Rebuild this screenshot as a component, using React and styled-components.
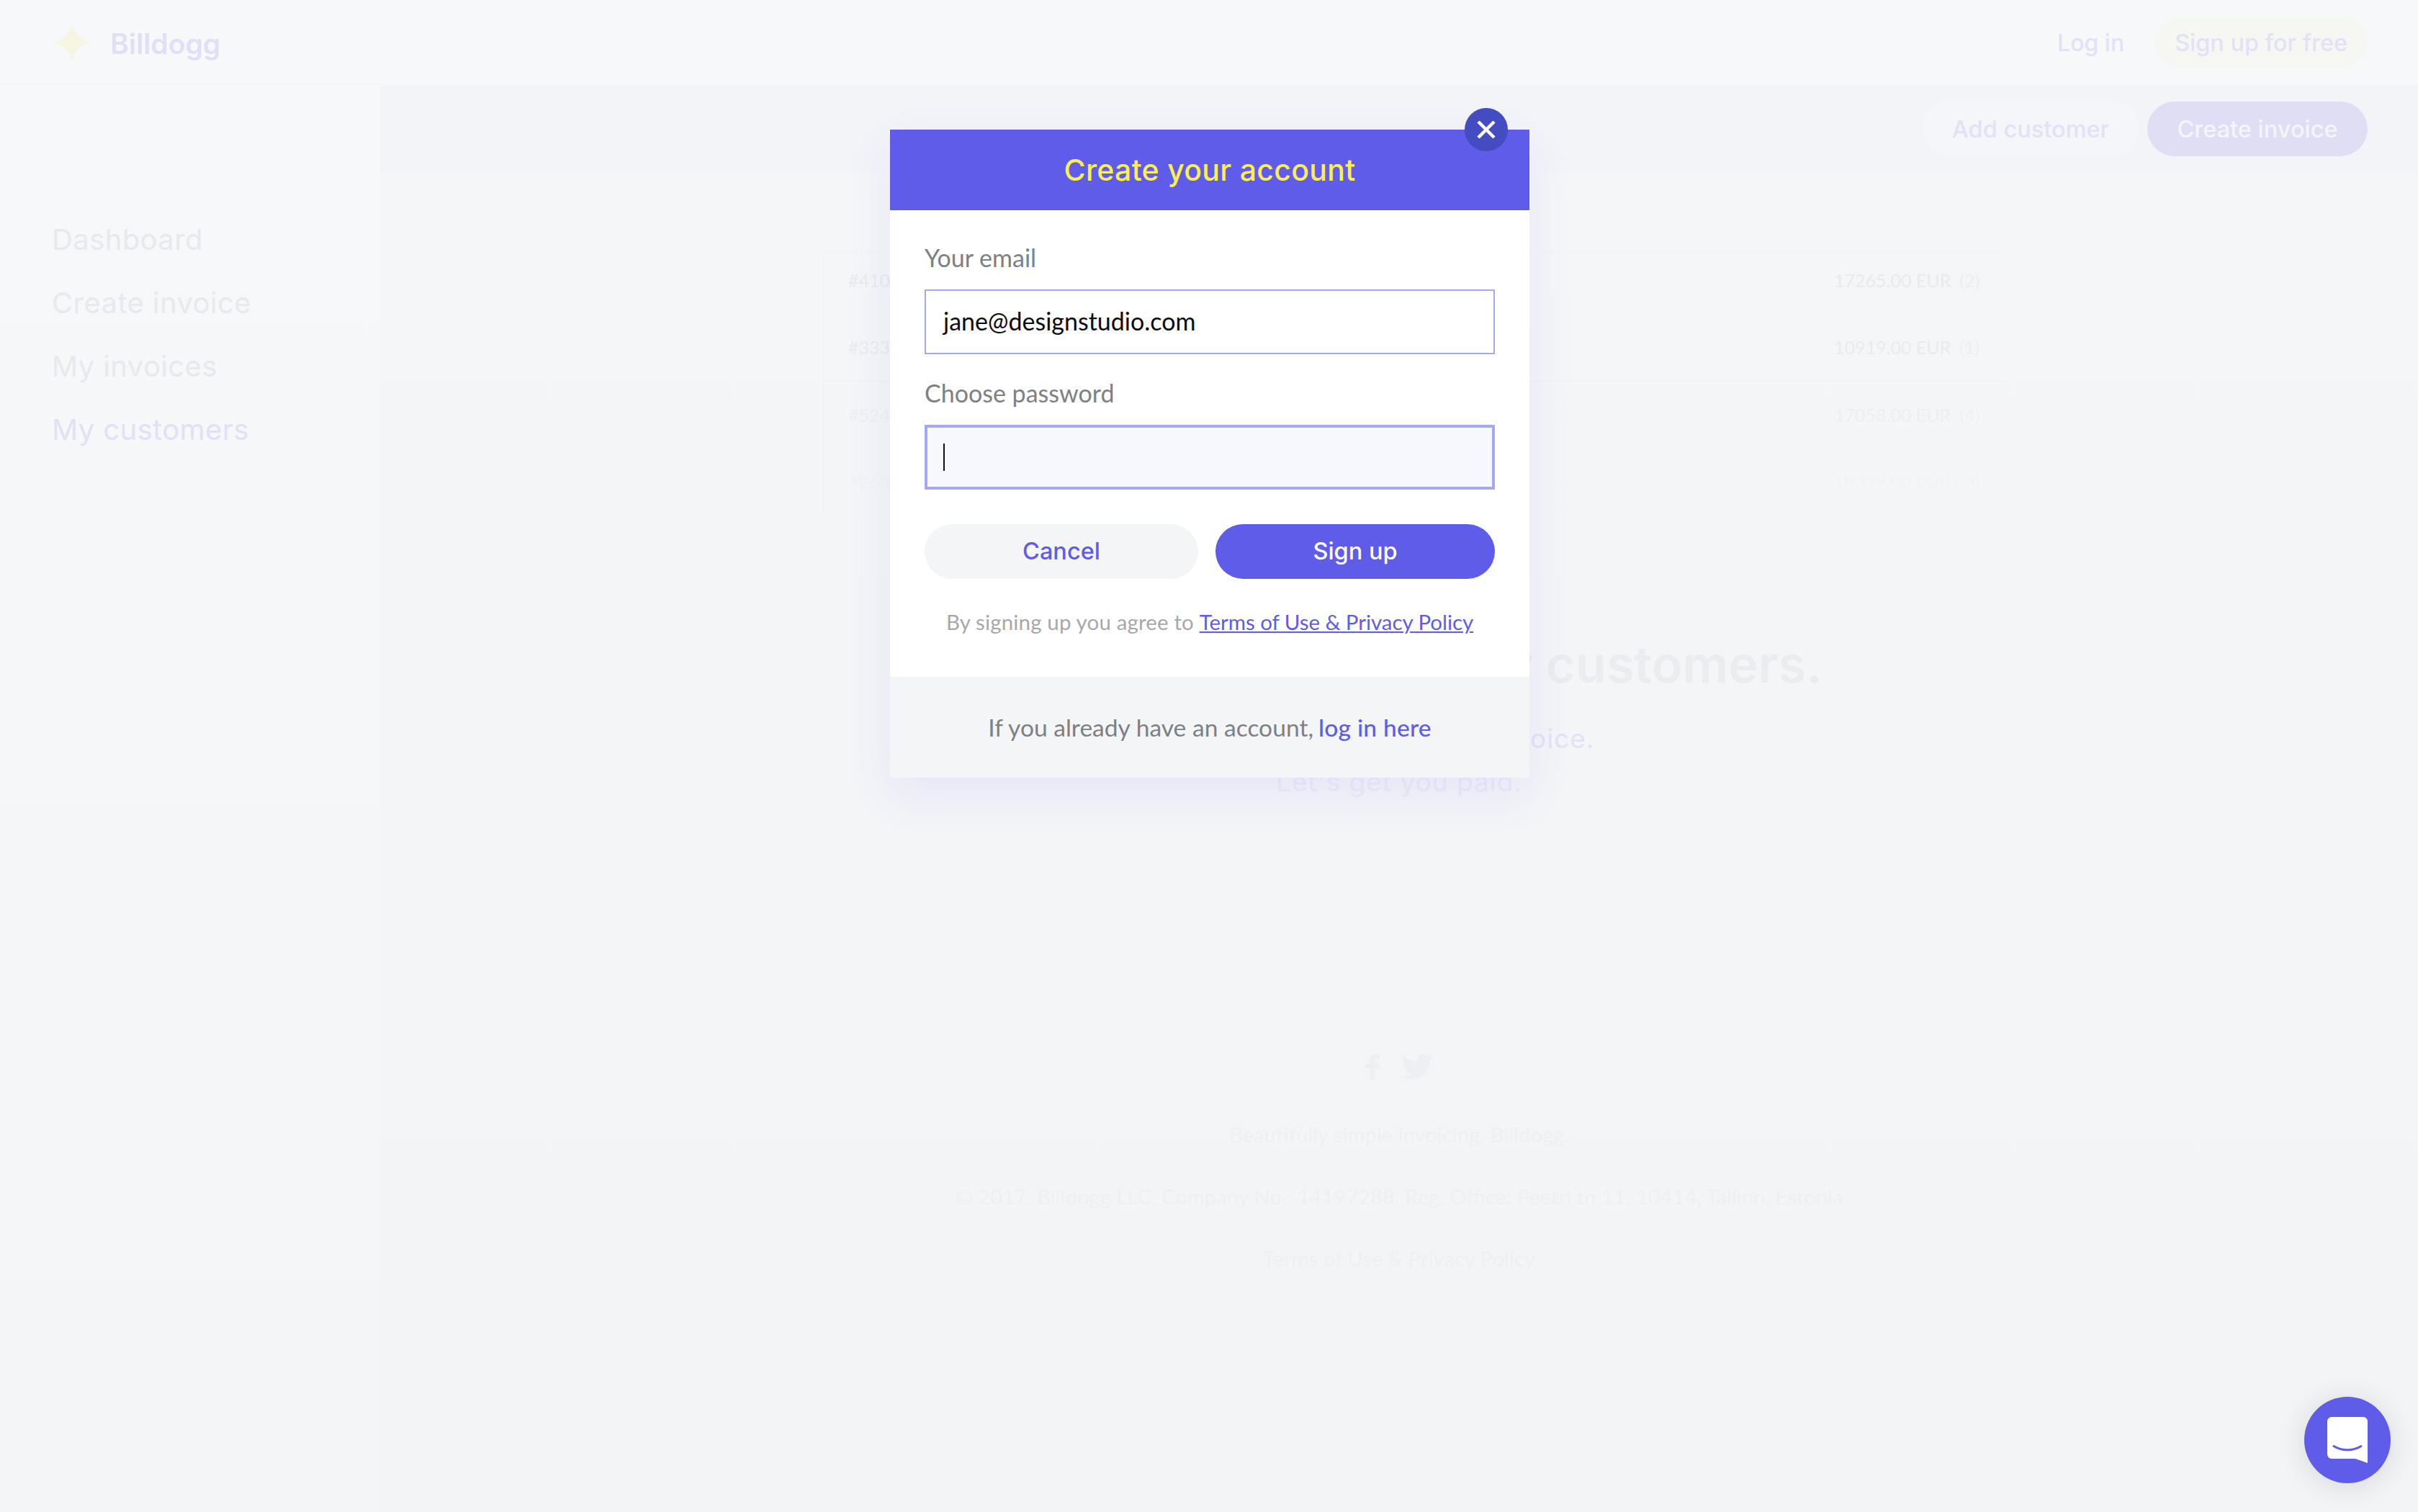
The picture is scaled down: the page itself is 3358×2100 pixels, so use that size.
import React from "react";
import styled, { createGlobalStyle } from "styled-components";

const GlobalStyle = createGlobalStyle`
  html, body {
    margin: 0;
    padding: 0;
    background: #f4f5f7;
  }
  * {
    box-sizing: border-box;
  }
`;

const headFont = `"Inter", "Liberation Sans", sans-serif`;
const bodyFont = `"Lato", "Open Sans", sans-serif`;

const Page = styled.div`
  position: relative;
  width: 3358px;
  height: 2100px;
  overflow: hidden;
  display: flex;
  flex-direction: column;
  background: linear-gradient(#f5f6f8, #f3f4f6);
  font-family: ${bodyFont};
`;

const TopBar = styled.header`
  height: 118px;
  flex: none;
  display: flex;
  align-items: center;
  justify-content: space-between;
  padding: 2px 70px 0 72px;
  background: #f7f8fa;
  border-bottom: 2px solid #f5f6f8;
`;

const Brand = styled.div`
  display: flex;
  align-items: center;
  gap: 25px;
  font-family: ${headFont};
  font-weight: 600;
  font-size: 39px;
  color: #e0dff6;
`;

const BrandName = styled.span`
  padding-top: 2px;
`;

const TopActions = styled.div`
  display: flex;
  align-items: center;
  gap: 42px;
`;

const TopLink = styled.span`
  font-family: ${headFont};
  font-weight: 500;
  font-size: 32px;
  color: #e2e1f7;
`;

const FreePill = styled.span`
  display: flex;
  align-items: center;
  height: 70px;
  padding: 0 28px;
  border-radius: 35px;
  background: #f6f7f3;
  font-family: ${headFont};
  font-weight: 500;
  font-size: 32.4px;
  color: #e2e1f7;
`;

const Body = styled.div`
  flex: 1;
  display: flex;
`;

const Sidebar = styled.nav`
  width: 528px;
  flex: none;
  display: flex;
  flex-direction: column;
  gap: 44px;
  padding: 193px 0 0 72px;
  background: linear-gradient(#f7f8fa, #f4f5f7);
`;

const NavItem = styled.div`
  height: 44px;
  line-height: 44px;
  font-family: ${headFont};
  font-size: 40px;
  letter-spacing: 0.4px;
  color: ${(p) => (p.$active ? "#e1e0f6" : "#e8e9ee")};
`;

const Main = styled.main`
  flex: 1;
  display: flex;
  flex-direction: column;
`;

const ActionBand = styled.div`
  height: 122px;
  flex: none;
  display: flex;
  align-items: center;
  justify-content: flex-end;
  gap: 12px;
  padding-right: 70px;
  background: #f3f4f8;
`;

const BandButton = styled.div`
  height: 76px;
  width: ${(p) => p.$w}px;
  display: flex;
  align-items: center;
  justify-content: center;
  border-radius: 38px;
  font-family: ${headFont};
  font-weight: 500;
  font-size: 32.5px;
  background: ${(p) => (p.$primary ? "#dfdef5" : "#f5f6f9")};
  color: ${(p) => (p.$primary ? "#f4f5f9" : "#e2e1f6")};
`;

const Card = styled.section`
  width: 1643px;
  margin: 110px 0 0 614px;
  border-top: 2px solid #f3f4f7;
  border-left: 2px solid #f2f3f6;
`;

const CardRow = styled.div`
  height: 93px;
  display: flex;
  align-items: center;
  justify-content: space-between;
  padding-left: 34px;
  font-size: 25px;
  color: ${(p) => p.$color};
  border-top: ${(p) => (p.$divider ? "2px solid #f2f3f6" : "0")};

  &:first-child {
    margin-top: -10px;
  }
`;

const Amount = styled.div`
  width: 238px;
  display: flex;
  gap: 12px;
  white-space: nowrap;
`;

const Count = styled.span`
  opacity: 0.6;
`;

const Empty = styled.section`
  margin-top: 169px;
  display: flex;
  flex-direction: column;
  align-items: center;
`;

const EmptyTitle = styled.h2`
  margin: 0 0 33px;
  font-family: ${headFont};
  font-weight: 600;
  font-size: 70.4px;
  line-height: 80px;
  color: #ebecf0;
`;

const EmptyLine = styled.p`
  margin: 0;
  font-family: ${headFont};
  font-size: 37px;
  line-height: 60px;
  letter-spacing: 1px;
  color: ${(p) => p.$color};
`;

const Footer = styled.footer`
  margin-top: 346px;
  display: flex;
  flex-direction: column;
  align-items: center;
  color: #eff0f3;
  font-size: 29.2px;
`;

const Social = styled.div`
  display: flex;
  align-items: center;
  gap: 31px;
  height: 40px;
  margin-bottom: 54px;
`;

const FooterLine = styled.p`
  margin: 0 0 46px;
  line-height: 40px;
`;

const Modal = styled.div`
  position: absolute;
  left: 1236px;
  top: 180px;
  width: 888px;
  box-shadow: 0 24px 60px rgba(94, 91, 232, 0.09);
  background: #fff;
`;

const CloseButton = styled.button`
  position: absolute;
  top: -30px;
  right: 30px;
  width: 60px;
  height: 60px;
  padding: 0;
  border: 0;
  border-radius: 50%;
  display: flex;
  align-items: center;
  justify-content: center;
  background: #434cc0;
`;

const ModalHead = styled.div`
  height: 112px;
  display: flex;
  align-items: center;
  justify-content: center;
  background: #5f5ce9;
  font-family: ${headFont};
  font-weight: 500;
  font-size: 41px;
  letter-spacing: 0.3px;
  color: #fdee4f;
`;

const Form = styled.div`
  display: flex;
  flex-direction: column;
  padding: 46px 48px 0;
`;

const Label = styled.label`
  height: 40px;
  line-height: 40px;
  font-size: 34px;
  color: #7d8084;
  margin-bottom: 24px;
`;

const Input = styled.div`
  height: 90px;
  display: flex;
  align-items: center;
  padding: 0 ${(p) => (p.$focus ? 22 : 24)}px;
  padding-bottom: ${(p) => (p.$focus ? 0 : 3)}px;
  margin-bottom: 34px;
  border: ${(p) => (p.$focus ? "4px" : "2px")} solid #a6a7f1;
  background: ${(p) => (p.$focus ? "#f7f7fe" : "#fff")};
  font-size: 34px;
  color: #0b0b0f;
`;

const Caret = styled.span`
  width: 2px;
  height: 38px;
  background: #111;
`;

const Buttons = styled.div`
  display: flex;
  gap: 24px;
  margin-top: 14px;
`;

const Btn = styled.div`
  height: 76px;
  flex: ${(p) => (p.$primary ? "0 0 388px" : "0 0 380px")};
  display: flex;
  align-items: center;
  justify-content: center;
  padding-bottom: 1px;
  border-radius: 38px;
  font-family: ${headFont};
  font-weight: 500;
  font-size: 32.5px;
  background: ${(p) => (p.$primary ? "#5f5ce9" : "#f4f5f7")};
  color: ${(p) => (p.$primary ? "#fff" : "#5f5ce9")};
`;

const Terms = styled.p`
  margin: 40px 0 56px;
  line-height: 40px;
  text-align: center;
  font-size: 29.5px;
  letter-spacing: 0.15px;
  color: #a6a8ac;
`;

const TermsLink = styled.a`
  color: #5f5ce9;
  text-decoration: underline;
  letter-spacing: -0.05px;
`;

const ModalFoot = styled.div`
  height: 140px;
  display: flex;
  align-items: center;
  justify-content: center;
  gap: 7px;
  background: #f4f5f7;
  font-size: 33.6px;
  color: #7d8084;
`;

const LoginLink = styled.a`
  color: #5f5ce9;
  font-weight: 500;
  letter-spacing: 0.2px;
  text-decoration: none;
`;

const ChatBubble = styled.div`
  position: absolute;
  left: 3200px;
  top: 1940px;
  width: 120px;
  height: 120px;
  border-radius: 50%;
  display: flex;
  align-items: center;
  justify-content: center;
  background: #5f5ce9;
  box-shadow: 0 4px 40px rgba(0, 0, 0, 0.12);
`;

const rows = [
  { id: "#410", amount: "17265.00 EUR", count: "(2)", color: "#e9eaee" },
  { id: "#333", amount: "10919.00 EUR", count: "(1)", color: "#eaebef" },
  { id: "#524", amount: "17058.00 EUR", count: "(4)", color: "#eeeff2", divider: true },
  { id: "#260", amount: "10339.00 EUR", count: "(3)", color: "#f2f3f6" },
];

const Star = () => (
  <svg width="56" height="56" viewBox="0 0 60 60">
    <path
      d="M30 1C32 16 44 28 59 30C44 32 32 44 30 59C28 44 16 32 1 30C16 28 28 16 30 1Z"
      fill="#f5f5e0"
    />
  </svg>
);

const Facebook = () => (
  <svg width="20" height="36" viewBox="0 0 20 36">
    <path
      d="M13 36V20h6l1-7h-7V9c0-2 .6-3 3-3h4V0h-6C8 0 6 3 6 8v5H0v7h6v16z"
      fill="#eeeff2"
    />
  </svg>
);

const Twitter = () => (
  <svg width="43" height="36" viewBox="0 0 42 35">
    <path
      d="M42 4.300c-1.500.7-3.200 1.100-5 1.300 1.800-1 3.200-2.700 3.800-4.700-1.700 1-3.500 1.700-5.500 2.100C33.700 1.100 31.500 0 29 0c-4.800 0-8.600 3.900-8.600 8.600 0 .7.100 1.300.2 2C13.500 10.200 7.100 6.800 2.900 1.600c-.7 1.300-1.200 2.700-1.200 4.300 0 3 1.500 5.600 3.800 7.200-1.400 0-2.700-.4-3.900-1.100v.1c0 4.200 3 7.700 6.900 8.500-.7.200-1.500.3-2.300.3-.6 0-1.100-.1-1.600-.2 1.100 3.400 4.300 5.900 8 6C9.600 29 5.900 30.400 1.900 30.400c-.7 0-1.300 0-1.900-.1C3.800 32.700 8.300 34.100 13.200 34.100c15.800 0 24.500-13.100 24.500-24.500V8.500c1.700-1.200 3.100-2.700 4.300-4.200z"
      fill="#eeeff2"
    />
  </svg>
);

const Intercom = () => (
  <svg width="56" height="64" viewBox="0 0 56 64">
    <path
      d="M6 0h44a6 6 0 0 1 6 6v58l-17-6H6a6 6 0 0 1-6-6V6a6 6 0 0 1 6-6z"
      fill="#fff"
    />
    <path
      d="M9 40.500c11 7 27 7 38 0"
      fill="none"
      stroke="#5f5ce9"
      strokeWidth="3"
      strokeLinecap="round"
    />
  </svg>
);

const App = () => (
  <Page>
    <GlobalStyle />
    <TopBar>
      <Brand>
        <Star />
        <BrandName>Billdogg</BrandName>
      </Brand>
      <TopActions>
        <TopLink>Log in</TopLink>
        <FreePill>Sign up for free</FreePill>
      </TopActions>
    </TopBar>
    <Body>
      <Sidebar>
        <NavItem>Dashboard</NavItem>
        <NavItem>Create invoice</NavItem>
        <NavItem>My invoices</NavItem>
        <NavItem $active>My customers</NavItem>
      </Sidebar>
      <Main>
        <ActionBand>
          <BandButton $w={300}>Add customer</BandButton>
          <BandButton $w={306} $primary>
            Create invoice
          </BandButton>
        </ActionBand>
        <Card>
          {rows.map((r) => (
            <CardRow key={r.id} $color={r.color} $divider={r.divider}>
              <span>{r.id}</span>
              <Amount>
                {r.amount}
                <Count>{r.count}</Count>
              </Amount>
            </CardRow>
          ))}
        </Card>
        <Empty>
          <EmptyTitle>You haven't added any customers.</EmptyTitle>
          <EmptyLine $color="#e3e2f7">Now create your first invoice.</EmptyLine>
          <EmptyLine $color="#eceaf8">Let's get you paid.</EmptyLine>
        </Empty>
        <Footer>
          <Social>
            <Facebook />
            <Twitter />
          </Social>
          <FooterLine>Beautifully simple invoicing. Billdogg.</FooterLine>
          <FooterLine>
            © 2017. Billdogg LLC. Company No.: 14197288. Reg. Office: Peetri tn 11, 10414, Tallinn, Estonia
          </FooterLine>
          <FooterLine>Terms of Use &amp; Privacy Policy</FooterLine>
        </Footer>
      </Main>
    </Body>
    <Modal>
      <CloseButton aria-label="Close">
        <svg width="28" height="28" viewBox="0 0 28 28">
          <path d="M3 3l22 22M25 3L3 25" stroke="#fff" strokeWidth="4.400" />
        </svg>
      </CloseButton>
      <ModalHead>Create your account</ModalHead>
      <Form>
        <Label>Your email</Label>
        <Input>jane@designstudio.com</Input>
        <Label>Choose password</Label>
        <Input $focus>
          <Caret />
        </Input>
        <Buttons>
          <Btn>Cancel</Btn>
          <Btn $primary>Sign up</Btn>
        </Buttons>
        <Terms>
          By signing up you agree to <TermsLink href="#terms">Terms of Use &amp; Privacy Policy</TermsLink>
        </Terms>
      </Form>
      <ModalFoot>
        If you already have an account, <LoginLink href="#login">log in here</LoginLink>
      </ModalFoot>
    </Modal>
    <ChatBubble>
      <Intercom />
    </ChatBubble>
  </Page>
);

export default App;
